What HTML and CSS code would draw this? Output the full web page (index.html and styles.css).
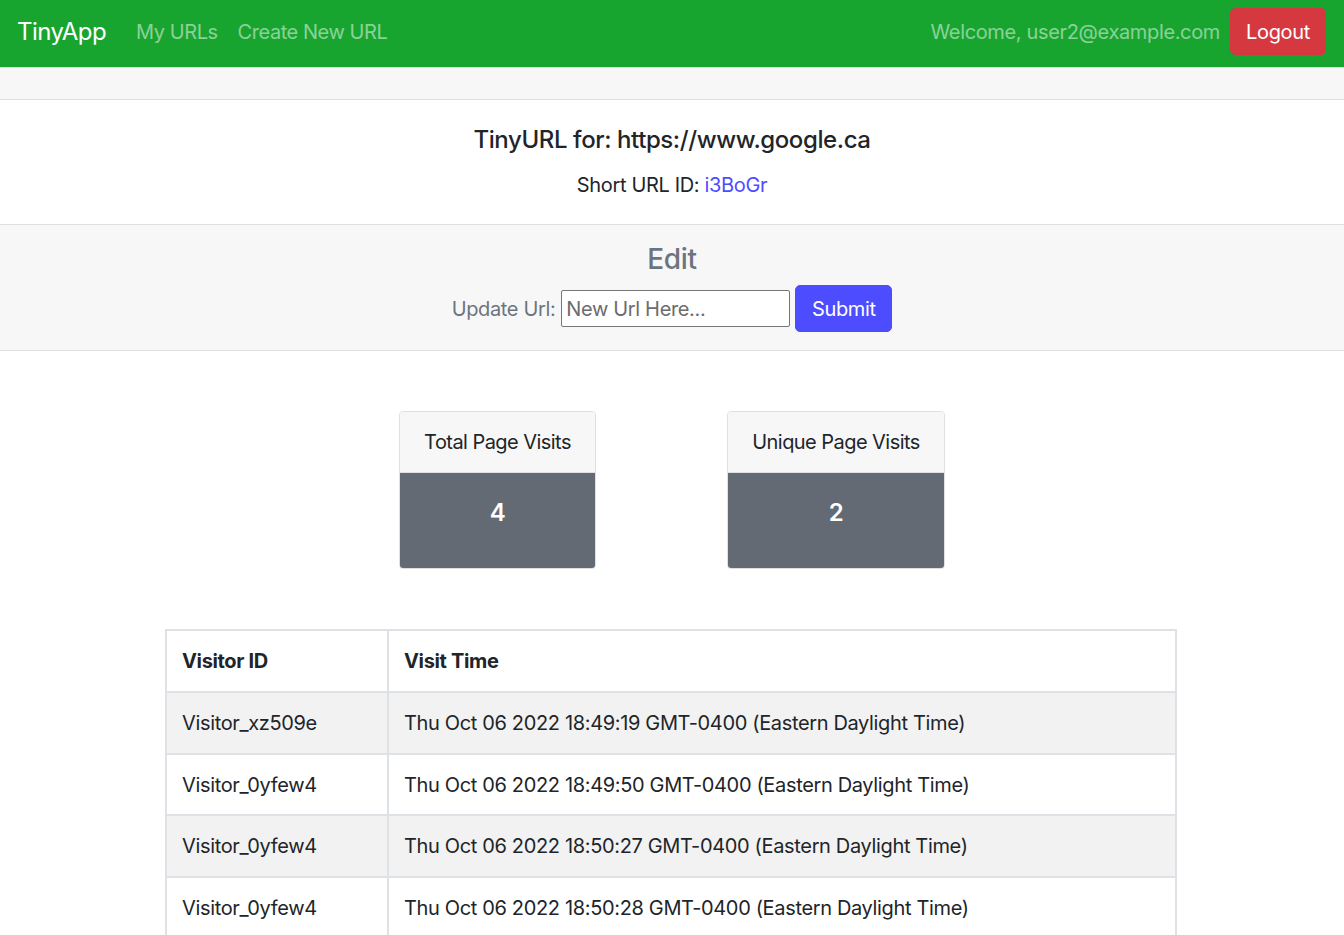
FILE: index.html
```html
<!DOCTYPE html>
<html>
<head>
<meta charset="utf-8">
<title>TinyApp</title>
<link rel="stylesheet" href="styles.css">
</head>
<body>
<nav class="navbar">
  <div class="nav-left">
    <a class="brand" href="#">TinyApp</a>
    <a class="nav-link" href="#">My URLs</a>
    <a class="nav-link" href="#">Create New URL</a>
  </div>
  <div class="nav-right">
    <span class="welcome">Welcome, user2@example.com</span>
    <button class="btn btn-danger">Logout</button>
  </div>
</nav>

<div class="card main-card">
  <div class="card-header empty"></div>
  <div class="card-body center">
    <h5 class="card-title">TinyURL for: https://www.google.ca</h5>
    <p class="card-text">Short URL ID: <a class="link" href="#">i3BoGr</a></p>
  </div>
  <div class="card-footer center">
    <h4 class="edit-title">Edit</h4>
    <form class="edit-form">
      <label class="muted" for="u">Update Url:</label>
      <input id="u" class="url-input" type="text" placeholder="New Url Here...">
      <button type="button" class="btn btn-primary">Submit</button>
    </form>
  </div>
</div>

<div class="stats">
  <div class="card stat-card stat-total">
    <div class="card-header">Total Page Visits</div>
    <div class="card-body stat-body"><h5 class="stat-num">4</h5></div>
  </div>
  <div class="card stat-card stat-unique">
    <div class="card-header">Unique Page Visits</div>
    <div class="card-body stat-body"><h5 class="stat-num">2</h5></div>
  </div>
</div>

<table class="visits">
  <thead>
    <tr><th class="col-id">Visitor ID</th><th>Visit Time</th></tr>
  </thead>
  <tbody>
    <tr class="odd"><td>Visitor_xz509e</td><td>Thu Oct 06 2022 18:49:19 GMT-0400 (Eastern Daylight Time)</td></tr>
    <tr><td>Visitor_0yfew4</td><td>Thu Oct 06 2022 18:49:50 GMT-0400 (Eastern Daylight Time)</td></tr>
    <tr class="odd"><td>Visitor_0yfew4</td><td>Thu Oct 06 2022 18:50:27 GMT-0400 (Eastern Daylight Time)</td></tr>
    <tr><td>Visitor_0yfew4</td><td>Thu Oct 06 2022 18:50:28 GMT-0400 (Eastern Daylight Time)</td></tr>
  </tbody>
</table>
</body>
</html>
```
FILE: styles.css
```css
* { box-sizing: border-box; }
html, body {
  margin: 0;
  padding: 0;
}
body {
  font-family: Inter, "Noto Sans", Roboto, Arial, sans-serif;
  font-size: 20px;
  line-height: 1.5;
  color: #212529;
  background: #fff;
  letter-spacing: -0.35px;
}
a { text-decoration: none; }

.navbar {
  display: flex;
  justify-content: space-between;
  align-items: center;
  padding: 8px 18px 12px 17px;
  background: #18a52f;
  height: 67px;
}
.nav-left, .nav-right {
  display: flex;
  align-items: center;
}
.brand {
  color: #fff;
  font-size: 24px;
  line-height: 30px;
  margin-right: 20px;
  letter-spacing: -0.55px;
}
.nav-link {
  color: rgba(255,255,255,0.5);
  padding: 0 10px;
  letter-spacing: -0.45px;
}
.welcome {
  color: rgba(255,255,255,0.5);
  margin-right: 10px;
  letter-spacing: -0.35px;
}
.btn {
  font-family: inherit;
  font-size: 20px;
  line-height: 30px;
  border: 1px solid transparent;
  border-radius: 5px;
  padding: 7.5px 15px;
  color: #fff;
  cursor: pointer;
  letter-spacing: -0.35px;
}
.btn-danger {
  background: #d63840;
  border-color: #d63840;
  width: 96px;
}
.btn-primary {
  background: #4d4dff;
  border-color: #4d4dff;
  padding: 7.5px 15px;
  width: 97px;
}

.card {
  border: 1px solid #dfdfdf;
  background: #fff;
}
.main-card {
  border-left: 0;
  border-right: 0;
}
.card-header {
  background: #f7f7f7;
  border-bottom: 1px solid #dfdfdf;
  padding: 15px 25px;
}
.card-header.empty { height: 32px; padding: 0; }
.center { text-align: center; }
.card-body { padding: 25px; }
.main-card .card-body { padding: 25px 25px 24px; }
.card-title {
  margin: 0 0 15px;
  font-size: 24px;
  line-height: 30px;
  font-weight: 500;
  letter-spacing: -0.4px;
}
.card-text { margin: 0; }
.link { color: #4d4dff; }

.card-footer {
  background: #f7f7f7;
  border-top: 1px solid #dfdfdf;
  padding: 16px 25px 18px;
}
.edit-title {
  margin: 0 0 8px;
  font-size: 28px;
  line-height: 36px;
  font-weight: 500;
  color: #6c757d;
}
.edit-form {
  display: flex;
  justify-content: center;
  align-items: center;
}
.muted { color: #6c757d; margin-right: 6px; }
.url-input {
  width: 229px;
  height: 37px;
  font-family: inherit;
  font-size: 20px;
  letter-spacing: -0.35px;
  color: #212529;
  border: 1px solid #767676;
  border-radius: 2px;
  padding: 1px 4px;
  margin-right: 5px;
  background: #fff;
}
.url-input::placeholder { color: #6c6c6c; }

.stats {
  display: flex;
  justify-content: center;
  align-items: flex-start;
  gap: 131px;
  margin-top: 60px;
}
.stat-card {
  border-radius: 4px;
  overflow: hidden;
}
.stat-total { width: 197px; }
.stat-unique { width: 218px; }
.stat-card .card-header {
  text-align: center;
  line-height: 30px;
  padding: 15px 0;
  letter-spacing: -0.55px;
}
.stat-body {
  background: #636a74;
  text-align: center;
}
.stat-num {
  margin: 0 0 15px;
  color: #fff;
  font-size: 24px;
  line-height: 30px;
  font-weight: 600;
}

.visits {
  width: 1012px;
  margin: 60px 0 0 165px;
  border-collapse: collapse;
}
.visits th, .visits td {
  border: 2px solid #dee2e6;
  padding: 15px 15px 14.5px;
  text-align: left;
  line-height: 30px;
  vertical-align: top;
}
.visits th { font-weight: 700; padding-bottom: 15px; }
.visits .col-id { width: 222px; }
.visits tr.odd td { background: #f2f2f2; }
```
